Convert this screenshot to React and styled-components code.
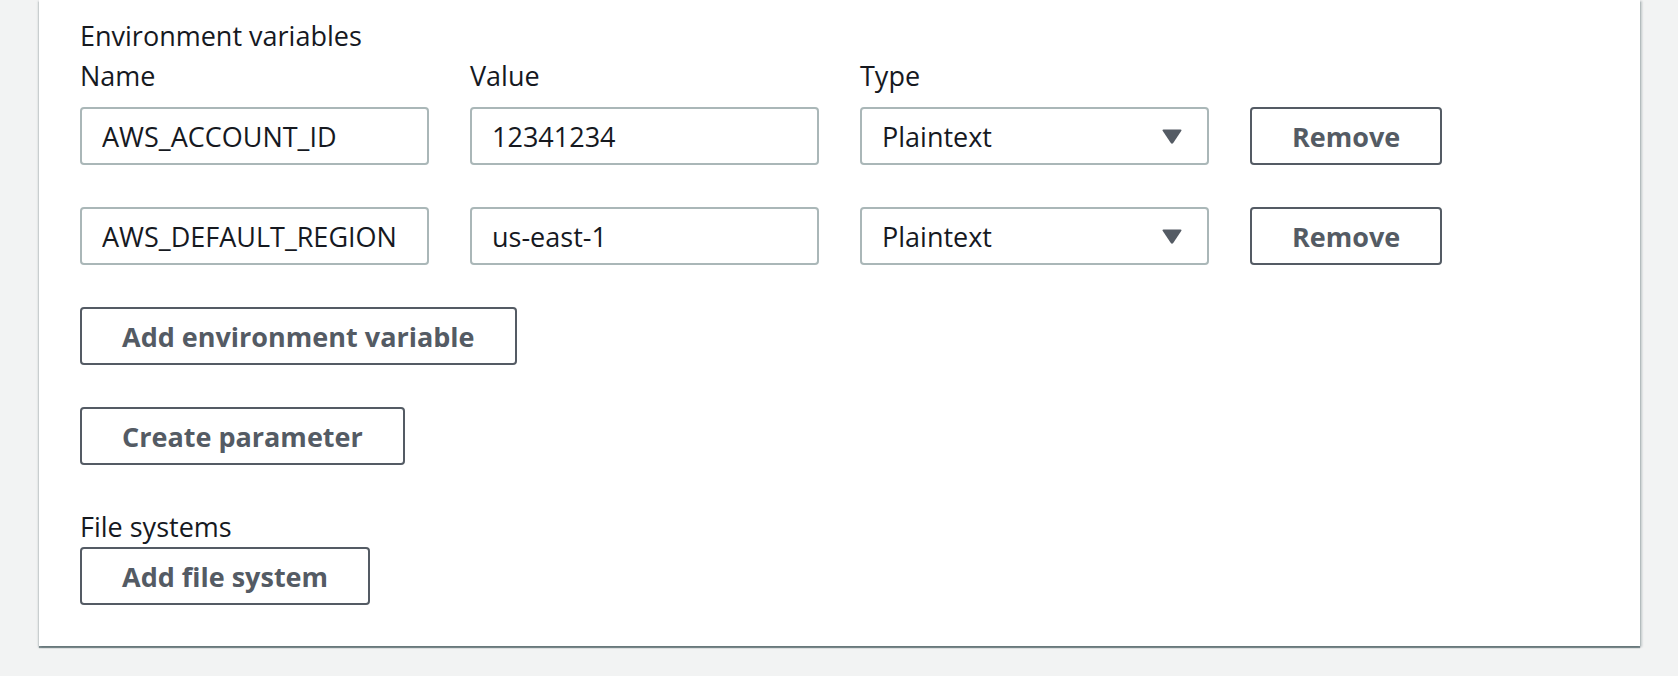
import React from 'react';
import styled, { createGlobalStyle } from 'styled-components';

const GlobalStyle = createGlobalStyle`
	html, body {
		margin: 0;
		padding: 0;
		background: #f2f3f3;
	}
	body {
		font-family: 'Open Sans', 'Noto Sans', 'Liberation Sans', sans-serif;
		color: #16191f;
	}
`;

const VARIABLES = [
	{ name: 'AWS_ACCOUNT_ID', value: '12341234', type: 'Plaintext' },
	{ name: 'AWS_DEFAULT_REGION', value: 'us-east-1', type: 'Plaintext' },
];

export default function App() {
	return (
		<Page>
			<GlobalStyle />
			<Card>
				<Label>Environment variables</Label>
				<VarRow header>
					<Label>Name</Label>
					<Label>Value</Label>
					<Label>Type</Label>
				</VarRow>
				<VarList>
					{VARIABLES.map(v => (
						<VarRow key={v.name}>
							<TextInput defaultValue={v.name} />
							<TextInput defaultValue={v.value} />
							<Select>
								<span>{v.type}</span>
								<Caret viewBox='0 0 20 15'>
									<path d='M1.5 0.5 H18.5 Q20 0.5 19.2 2 L11.2 14 Q10 15.5 8.8 14 L0.8 2 Q0 0.5 1.5 0.5 Z' />
								</Caret>
							</Select>
							<Button>Remove</Button>
						</VarRow>
					))}
				</VarList>
				<Stack>
					<div><Button>Add environment variable</Button></div>
					<div><Button>Create parameter</Button></div>
					<Field>
						<Label>File systems</Label>
						<div><Button>Add file system</Button></div>
					</Field>
				</Stack>
			</Card>
		</Page>
	);
}

const Page = styled.div`
	padding: 0 38px 30px 39px;
`;

const Card = styled.div`
	background: #ffffff;
	padding: 16px 41px 41px 41px;
	box-shadow: 0 2px 1px 0 rgba(0, 28, 36, 0.45), 2px 1px 2px 0 rgba(0, 28, 36, 0.2),
		-1px 1px 2px 0 rgba(0, 28, 36, 0.15);
`;

const Label = styled.div`
	font-size: 27px;
	line-height: 40px;
	color: #16191f;
`;

const VarRow = styled.div`
	display: grid;
	grid-template-columns: 349px 349px 349px 192px;
	column-gap: 41px;
	margin-bottom: ${props => (props.header ? '11px' : '0')};
`;

const VarList = styled.div`
	display: flex;
	flex-direction: column;
	gap: 42px;
`;

const TextInput = styled.input`
	box-sizing: border-box;
	height: 58px;
	width: 100%;
	border: 2px solid #aab7b8;
	border-radius: 4px;
	padding: 0 20px;
	font-family: inherit;
	font-size: 27px;
	color: #16191f;
	background: #ffffff;
	outline: none;
`;

const Select = styled.div`
	box-sizing: border-box;
	height: 58px;
	display: flex;
	align-items: center;
	justify-content: space-between;
	border: 2px solid #aab7b8;
	border-radius: 4px;
	padding: 0 25px 0 20px;
	font-size: 27px;
	color: #16191f;
`;

const Caret = styled.svg`
	width: 20px;
	height: 15px;
	fill: #545b64;
`;

const Stack = styled.div`
	display: flex;
	flex-direction: column;
	gap: 42px;
	margin-top: 42px;
`;

const Field = styled.div`
	display: flex;
	flex-direction: column;
`;

const Button = styled.button`
	box-sizing: border-box;
	height: 58px;
	padding: 0 40px;
	border: 2px solid #545b64;
	border-radius: 4px;
	background: #ffffff;
	font-family: inherit;
	font-size: 27px;
	font-weight: 700;
	color: #545b64;
	cursor: pointer;
`;
